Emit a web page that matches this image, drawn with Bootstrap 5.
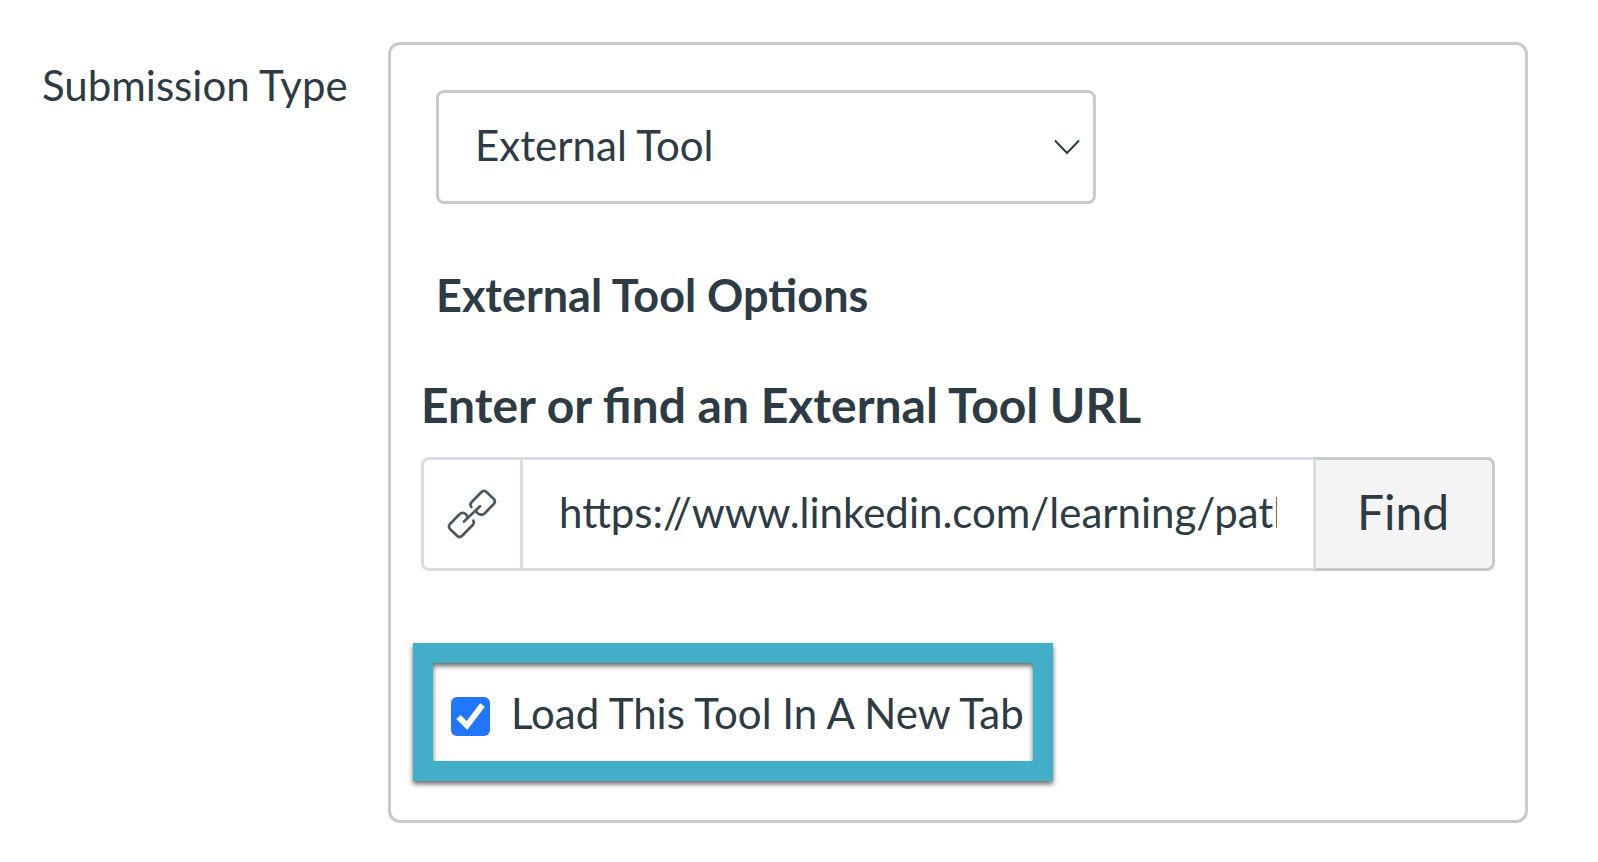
<!DOCTYPE html>
<html lang="en">
<head>
<meta charset="utf-8">
<meta name="viewport" content="width=device-width, initial-scale=1">
<title>Submission Type</title>
<link href="https://cdn.jsdelivr.net/npm/bootstrap@5.3.0/dist/css/bootstrap.min.css" rel="stylesheet">
<style>
  body { font-family: Lato, sans-serif; font-size: 42px; line-height: 54px; color: #2d3b45; background: #fff; }
  .page-form { padding: 42px 70px 39px 42px; }
  .type-label { flex: 0 0 346px; padding-top: 16px; }
  .panel { min-width: 0; border: 3px solid #cacaca; border-radius: 12px; padding: 45px 30px 39px; }
  .inset { margin-left: 15px; }
  .type-select { width: 660px; max-width: 100%; height: 114px; border: 3px solid #cacaca; border-radius: 8px; padding: 0 60px 4px 36px; font-size: 42px; line-height: 54px; color: inherit;
    background-image: url("data:image/svg+xml,%3Csvg xmlns='http://www.w3.org/2000/svg' viewBox='0 0 26 16'%3E%3Cpath d='M1 1.500 13 14 25 1.500' fill='none' stroke='%232d3b45' stroke-width='2'/%3E%3C/svg%3E");
    background-size: 26px 16px; background-position: right 13px center; }
  .options-title { font-size: 45px; line-height: 54px; font-weight: 700; margin-top: 64px; margin-bottom: 54px; }
  .url-title { display: block; font-size: 48px; line-height: 58px; font-weight: 700; margin-bottom: 23px; }
  .url-group { height: 114px; }
  .url-group > * { border: 3px solid #d9dde3; border-radius: 8px; }
  .url-icon { width: 102px; background: #fff; padding: 0; }
  .url-box { padding: 0 36px 4px; font-size: 42px; line-height: 54px; color: inherit; }
  /* neighbouring 3px borders share one line */
  .url-group > .url-box, .url-group > .find-btn { margin-left: -3px !important; }
  .find-btn { width: 182px; background: #f4f4f4; border-color: #c7c9cc; border-left-color: #d9dde3; font-size: 48px; line-height: 58px; color: inherit; padding: 0 2px 4px 0; }
  .callout { width: 640px; max-width: 100%; height: 138px; margin: 72px 0 0 -8px; border: 20px solid #43aec8; padding: 2px 0 0 18px;
    box-shadow: 0 3px 5px rgba(0,0,0,.6), inset 0 3px 5px rgba(0,0,0,.6); }
  .tab-check { appearance: none; flex: none; width: 39px; height: 39px; border-radius: 6px; margin: 7px 21px 0 0;
    background: #2176ff url("data:image/svg+xml,%3Csvg xmlns='http://www.w3.org/2000/svg' viewBox='0 0 39 39'%3E%3Cpath d='M7.500 20 16 28.500 31.500 8' fill='none' stroke='%23fff' stroke-width='6'/%3E%3C/svg%3E") center / 100%; }
</style>
</head>
<body>
<form class="page-form d-flex align-items-start">
  <label class="type-label" for="submission-type">Submission Type</label>
  <div class="panel flex-grow-1">
    <div class="inset">
      <select class="form-select type-select" id="submission-type">
        <option selected>External Tool</option>
      </select>
      <h2 class="options-title">External Tool Options</h2>
    </div>
    <label class="url-title" for="tool-url">Enter or find an External Tool URL</label>
    <div class="input-group flex-nowrap url-group">
      <span class="input-group-text justify-content-center url-icon">
        <svg width="50" height="50" viewBox="0 0 50 50" fill="none" stroke="#4c575f" stroke-width="2.700" stroke-linecap="round" stroke-linejoin="round" aria-hidden="true">
          <path d="M24.300 18Q22.500 15.500 24.300 13.500L34.500 3Q37 .700 39.500 3L46.800 10Q49 12.500 46.800 15L37.500 24.500Q34.500 27 31 24.500Q29.500 23.500 29 21.500"/>
          <path d="M26.300 31.700Q27.500 34 25.700 36L15.200 46.800Q12.500 49.300 10 46.800L3 40Q1 37.500 3 35L12.300 25.500Q15.500 22.500 19 25.300Q20 26.500 20.300 28.300"/>
          <path d="M17 32.500 33 17.300"/>
        </svg>
      </span>
      <input class="form-control url-box" id="tool-url" type="text" value="https://www.linkedin.com/learning/paths/">
      <button class="btn find-btn" type="button">Find</button>
    </div>
    <div class="callout d-flex align-items-center">
      <input class="tab-check" id="new-tab" type="checkbox" checked>
      <label class="text-nowrap" for="new-tab">Load This Tool In A New Tab</label>
    </div>
  </div>
</form>
<script src="https://cdn.jsdelivr.net/npm/bootstrap@5.3.0/dist/js/bootstrap.bundle.min.js"></script>
</body>
</html>
